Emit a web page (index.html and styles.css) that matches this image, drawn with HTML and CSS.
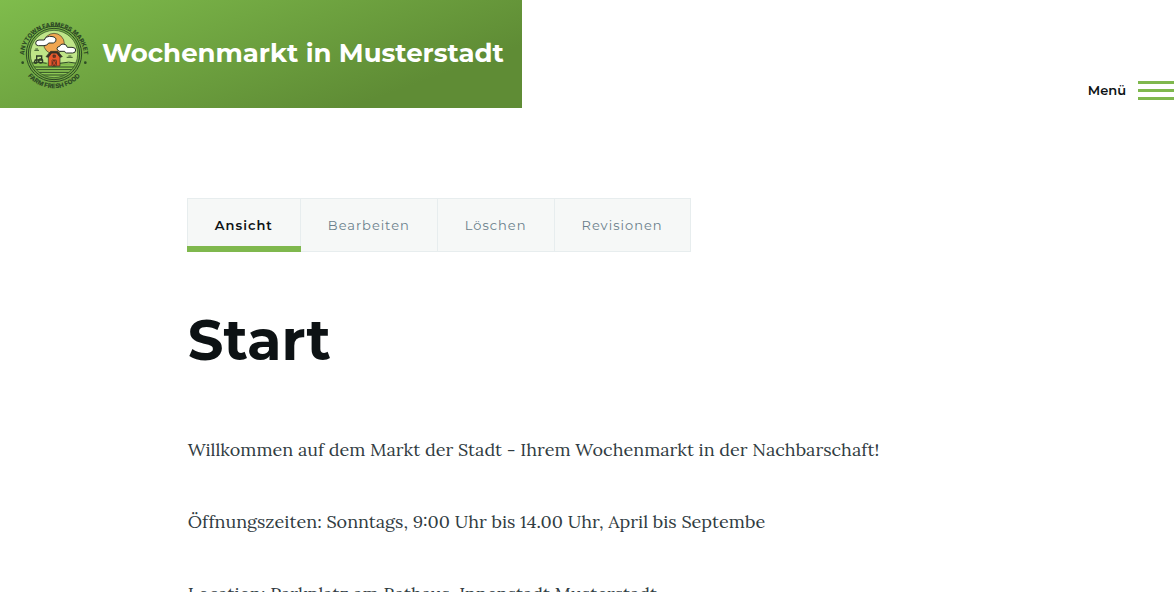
FILE: index.html
```html
<!DOCTYPE html>
<html lang="de">
<head>
<meta charset="utf-8">
<meta name="viewport" content="width=device-width, initial-scale=1">
<title>Start | Wochenmarkt in Musterstadt</title>
<link rel="stylesheet" href="styles.css">
</head>
<body>
<header class="site-header">
  <a class="branding" href="#">
    <svg class="branding-logo" viewBox="27 27 210 210" aria-hidden="true">
      <defs>
        <path id="arc-top" d="M42 140A90 90 0 1 1 222 140"/>
        <path id="arc-bottom" d="M29 132A103 103 0 0 0 235 132"/>
        <clipPath id="scene"><circle cx="132" cy="132" r="71"/></clipPath>
      </defs>
      <g class="logo-text">
        <text font-size="18"><textPath href="#arc-top" startOffset="50%">ANYTOWN FARMERS MARKET</textPath></text>
        <text font-size="19"><textPath href="#arc-bottom" startOffset="50%">FARM FRESH FOOD</textPath></text>
      </g>
      <circle cx="38" cy="158" r="4" fill="#2d4a25"/>
      <circle cx="226" cy="158" r="4" fill="#2d4a25"/>
      <circle cx="132" cy="132" r="83" fill="none" stroke="#2d4a25" stroke-width="3"/>
      <circle cx="132" cy="132" r="77" fill="none" stroke="#2d4a25" stroke-width="3"/>
      <g clip-path="url(#scene)">
        <path fill="#bfe588" d="M60 60h144v100H60z"/>
        <circle cx="132" cy="101" r="31" fill="#f0a650" stroke="#333c29" stroke-width="2"/>
        <path fill="#8cc653" d="M60 160q36-7 72 0t72 0v46H60z"/>
        <path fill="none" stroke="#2d4a25" stroke-width="3" d="M60 160q28-7 50 0M148 160q28-7 56 0M60 171h144M60 179h144M60 187h144M60 195h144"/>
      </g>
      <circle cx="132" cy="132" r="71" fill="none" stroke="#2d4a25" stroke-width="2"/>
      <g fill="#fff" stroke="#273027" stroke-width="3" stroke-linejoin="round">
        <path d="M85 107q-8 0-8-8t10-9h16q2-11 15-11 18 0 20 8 2 9-8 12h-14q-4 8-14 8z"/>
        <path d="M149 124q-8-2-8-8 0-6 8-7 2-7 10-7 11 0 13 10h14q11 0 11 8 0 9-9 9h-19q-4 0-5-5z"/>
      </g>
      <path fill="none" stroke="#3c5a2e" stroke-width="3" d="M73 121h14M76 117h8M170 142h18M175 138h9"/>
      <g stroke="#2c3025" stroke-width="2">
        <path fill="#e9582c" d="M115 168v-28l9-12h17l9 12v28z"/>
        <path fill="#3a3325" d="M108 140l14-16h21l14 16-7 2-10-13h-15l-10 13z"/>
        <path fill="#8f3420" d="M126 150h13v18h-13zM129 135h7v7h-7z"/>
        <path fill="none" stroke="#e9582c" d="M126 150l13 18M139 150l-13 18"/>
      </g>
      <g fill="none" stroke="#2d3b27" stroke-width="4">
        <path d="M80 148v-10h15v10M74 150h22"/>
        <circle cx="77" cy="156" r="4"/>
        <circle cx="92" cy="153" r="6"/>
      </g>
    </svg>
    <span class="branding-name">Wochenmarkt in Musterstadt</span>
  </a>
  <button class="menu-button" type="button">
    <span>Menü</span>
    <span class="menu-bars" aria-hidden="true"></span>
  </button>
</header>
<main class="content">
  <nav class="tabs" aria-label="Reiter">
    <a class="tab tab-active" href="#" aria-current="page">Ansicht</a>
    <a class="tab" href="#">Bearbeiten</a>
    <a class="tab" href="#">Löschen</a>
    <a class="tab" href="#">Revisionen</a>
  </nav>
  <h1 class="page-title">Start</h1>
  <div class="page-text">
    <p>Willkommen auf dem Markt der Stadt - Ihrem Wochenmarkt in der Nachbarschaft!</p>
    <p>Öffnungszeiten: Sonntags, 9:00 Uhr bis 14.00 Uhr, April bis Septembe</p>
    <p>Location: Parkplatz am Rathaus, Innenstadt Musterstadt</p>
  </div>
</main>
</body>
</html>
```
FILE: styles.css
```css
* { box-sizing: border-box; }

html { scrollbar-width: none; }

body {
  margin: 0;
  background: #fff;
  color: #0d1214;
  font-family: Metropolis, Montserrat, Inter, sans-serif;
}

.site-header {
  display: flex;
  justify-content: space-between;
  align-items: flex-end;
}

.branding {
  display: flex;
  align-items: center;
  gap: 13px;
  padding: 19px 18px 19px 19px;
  background: linear-gradient(160deg, #7fbc4c 0%, #5f8c35 79%);
  color: #fff;
  text-decoration: none;
}

.branding-logo {
  width: 70px;
  height: 70px;
  flex: none;
}

.logo-text {
  fill: #2d4a25;
  font-family: Inter, sans-serif;
  font-weight: 800;
  text-anchor: middle;
}

.branding-name {
  padding-bottom: 2px;
  font-size: 26px;
  font-weight: 700;
  line-height: 36px;
}

.menu-button {
  display: flex;
  align-items: center;
  gap: 12px;
  height: 36px;
  padding: 0;
  border: 0;
  background: none;
  color: #0d1214;
  font: 600 13px/18px Metropolis, Montserrat, Inter, sans-serif;
}

.menu-bars {
  width: 36px;
  height: 19px;
  border-top: 3px solid #7fb84d;
  border-bottom: 3px solid #7fb84d;
  background: linear-gradient(#7fb84d, #7fb84d) center / 100% 3px no-repeat;
}

.content {
  width: 68%;
  margin: 0 16%;
  padding-top: 90px;
}

.tabs {
  display: flex;
  width: fit-content;
  margin-left: -1px;
  border: 1px solid #e7edee;
  background: #f6f8f7;
}

.tab {
  display: flex;
  align-items: center;
  height: 52px;
  padding: 0 27px;
  color: #6a7f8b;
  font-size: 13px;
  letter-spacing: 1px;
  text-decoration: none;
}

.tab + .tab { border-left: 1px solid #e7edee; }

.tab-active {
  position: relative;
  color: #0d1214;
  font-weight: 600;
}

.tab-active::after {
  content: "";
  position: absolute;
  right: -1px;
  bottom: -1px;
  left: -1px;
  height: 6px;
  background: #7fb84d;
}

.page-title {
  margin: 52px 0 0;
  font-size: 56px;
  font-weight: 700;
  line-height: 72px;
}

.page-text {
  padding-top: 56px;
  color: #313c42;
  font: 18px/36px Lora, "Liberation Serif", serif;
}

.page-text p { margin: 0 0 36px; }
```
